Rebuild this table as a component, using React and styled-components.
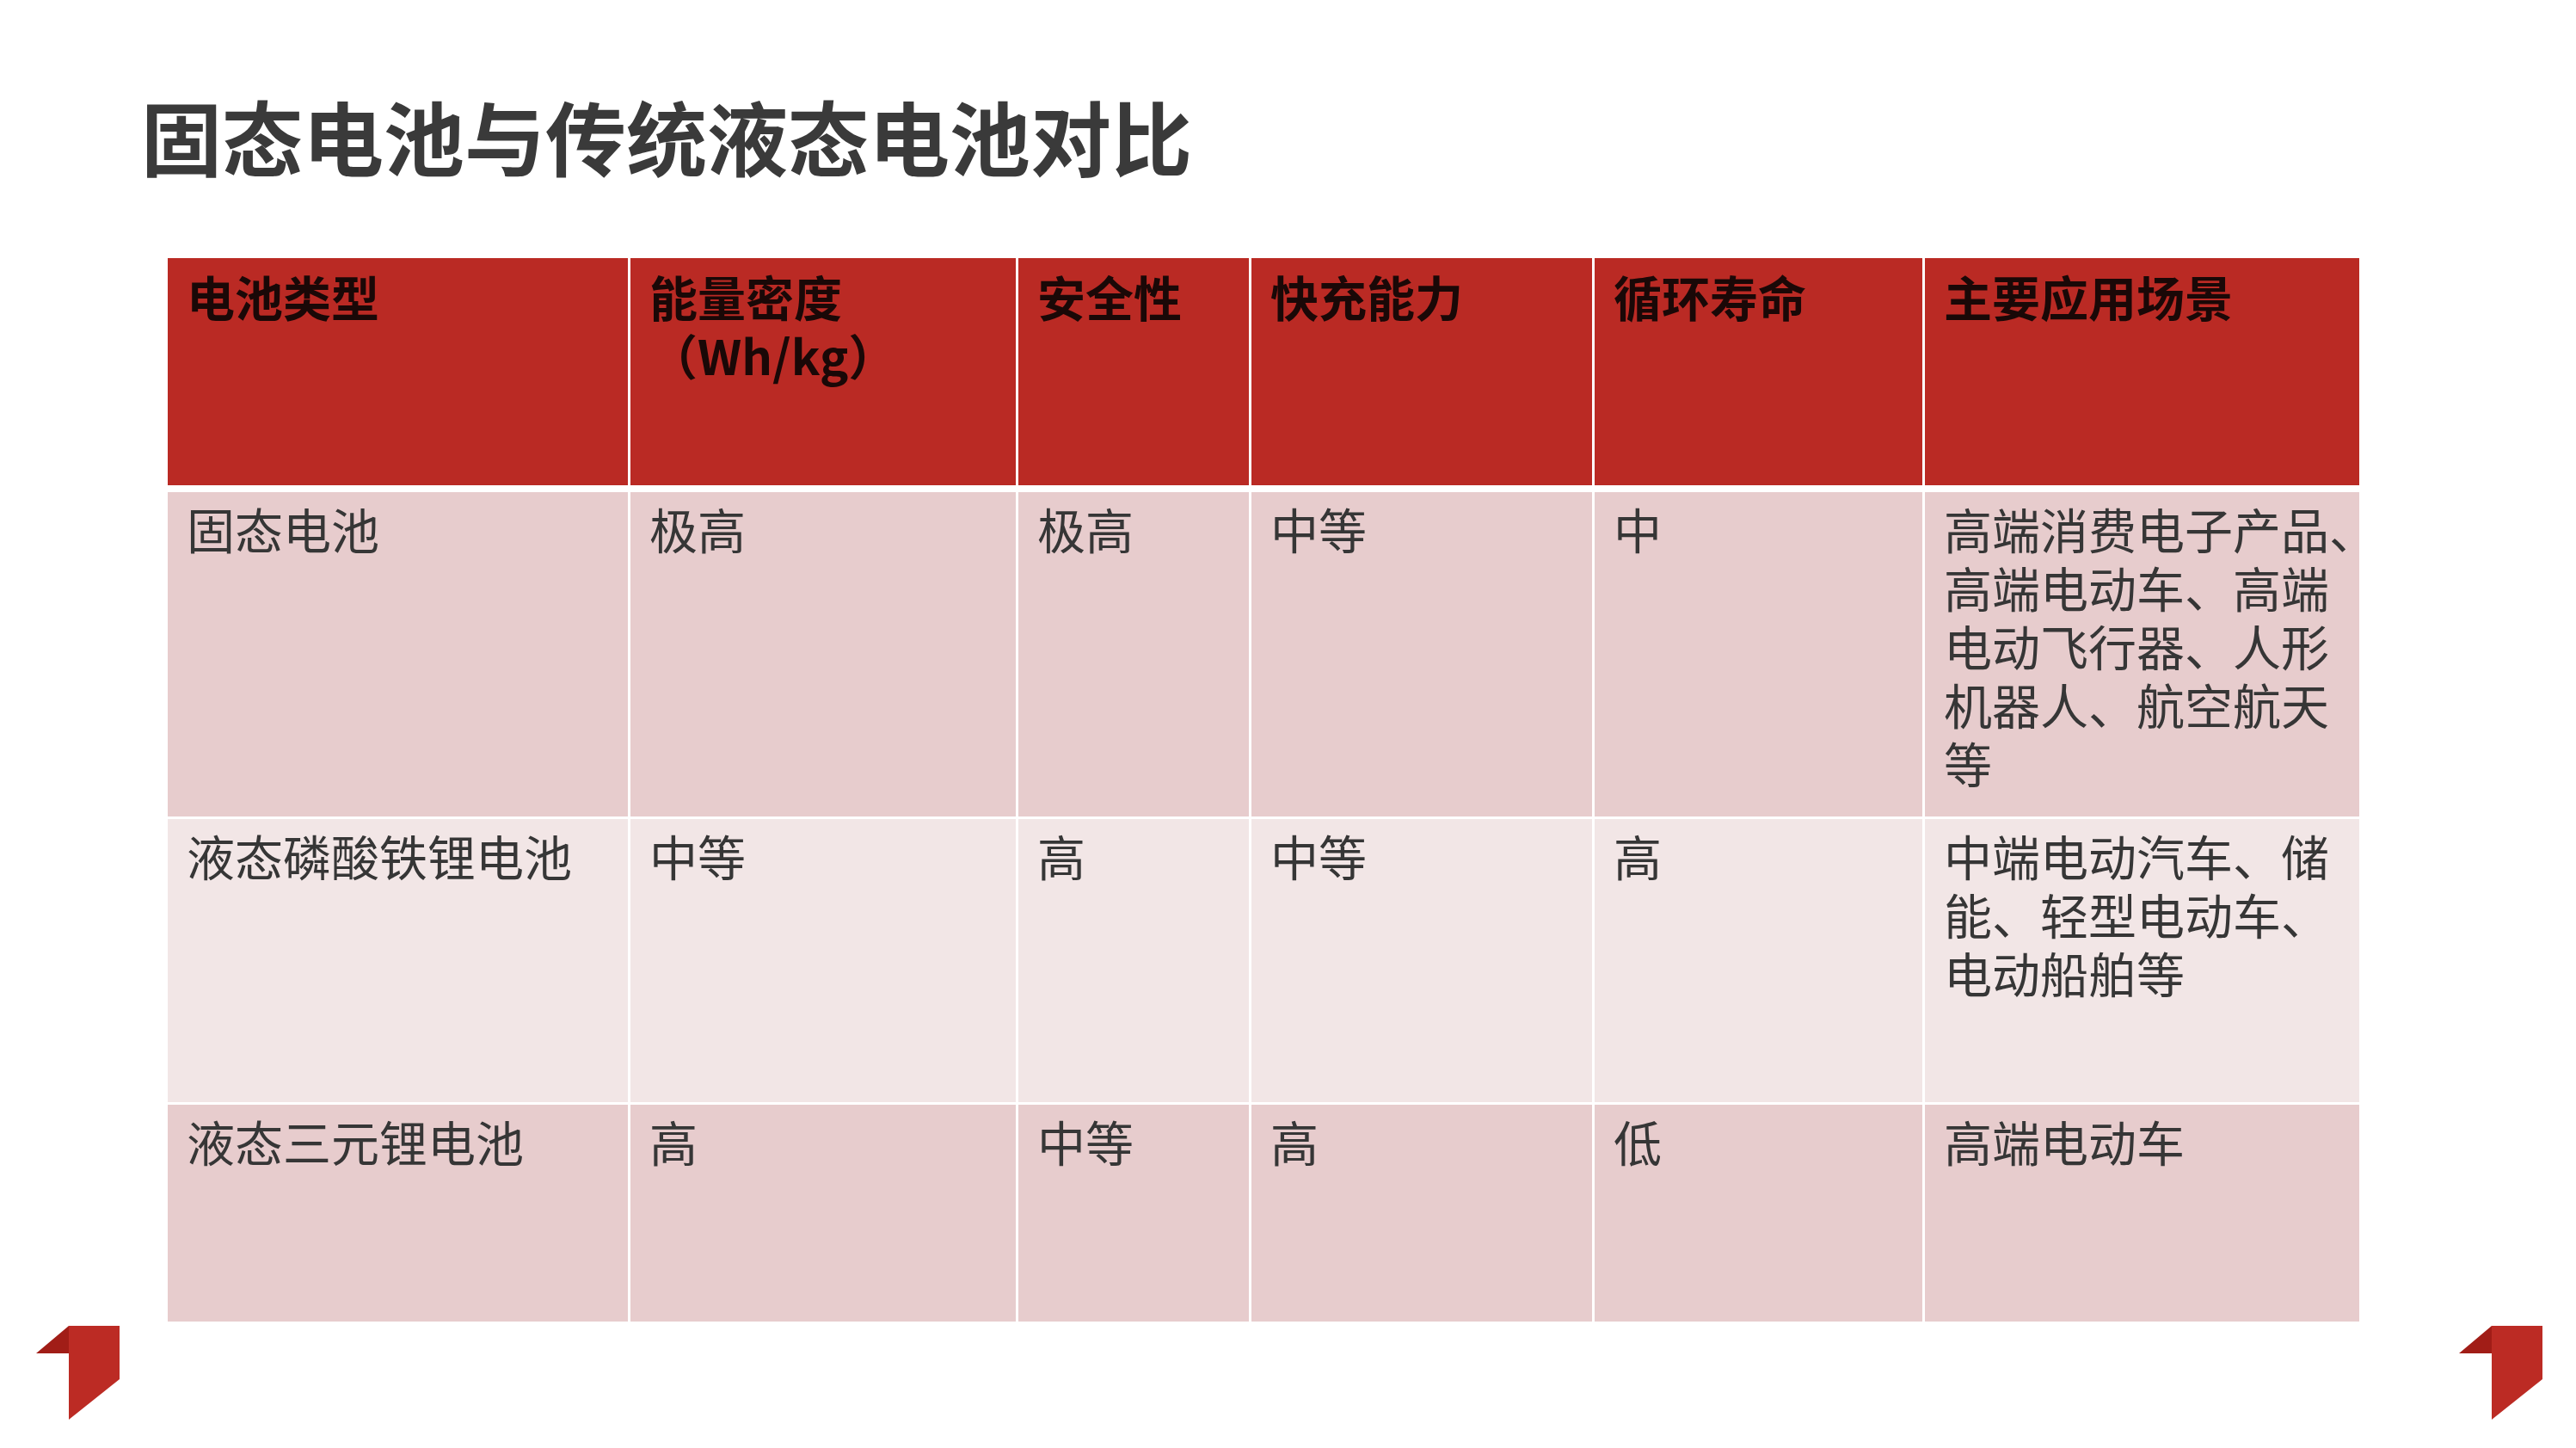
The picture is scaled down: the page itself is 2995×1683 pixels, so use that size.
import React from 'react';
import styled, { createGlobalStyle } from 'styled-components';

const GlobalStyle = createGlobalStyle`
  html, body {
    margin: 0;
    padding: 0;
    background: #ffffff;
  }
  body {
    font-family: "Noto Sans CJK SC", "Noto Sans", sans-serif;
  }
`;

const HEADER_RED = '#ba2a24';
const ROW_DARK = '#e7cccd';
const ROW_LIGHT = '#f2e6e6';

const COLS = [538, 451, 271, 399, 384, 508];

const HEADERS = [
  ['电池类型'],
  ['能量密度', '（Wh/kg）'],
  ['安全性'],
  ['快充能力'],
  ['循环寿命'],
  ['主要应用场景'],
];

const ROWS = [
  {
    height: 382,
    bg: ROW_DARK,
    cells: [
      ['固态电池'],
      ['极高'],
      ['极高'],
      ['中等'],
      ['中'],
      ['高端消费电子产品、', '高端电动车、高端', '电动飞行器、人形', '机器人、航空航天', '等'],
    ],
  },
  {
    height: 332,
    bg: ROW_LIGHT,
    cells: [
      ['液态磷酸铁锂电池'],
      ['中等'],
      ['高'],
      ['中等'],
      ['高'],
      ['中端电动汽车、储', '能、轻型电动车、', '电动船舶等'],
    ],
  },
  {
    height: 255,
    bg: ROW_DARK,
    cells: [
      ['液态三元锂电池'],
      ['高'],
      ['中等'],
      ['高'],
      ['低'],
      ['高端电动车'],
    ],
  },
];

const Slide = styled.div`
  width: 2995px;
  height: 1683px;
  display: flex;
  flex-direction: column;
  overflow: hidden;
  background: #fff;
`;

const Title = styled.h1`
  margin: 110px 0 0 164px;
  font-size: 94px;
  line-height: 94px;
  height: 94px;
  font-weight: 700;
  color: #3a3a3a;
  white-space: nowrap;
`;

const TableWrap = styled.div`
  margin: 96px 0 0 192px;
`;

const Table = styled.table`
  border-collapse: collapse;
  table-layout: fixed;
  width: ${COLS.reduce((a, b) => a + b, 0)}px;
`;

const HeadCell = styled.th`
  background: ${HEADER_RED};
  border: 3px solid #fff;
  border-top: none;
  border-bottom: 8px solid #fff;
  padding: 10px 10px 0 22px;
  vertical-align: top;
  text-align: left;
  font-size: 56px;
  line-height: 68px;
  font-weight: 700;
  color: #1a0807;
  white-space: nowrap;
`;

const HeadRow = styled.tr`
  height: 268px;
`;

const BodyRow = styled.tr`
  height: ${(p) => p.$h}px;
`;

const Cell = styled.td`
  background: ${(p) => p.$bg};
  border: 3px solid #fff;
  padding: 8px 10px 0 22px;
  vertical-align: top;
  font-size: 56px;
  line-height: 68px;
  font-weight: 400;
  color: #363636;
  white-space: nowrap;
`;

const Footer = styled.div`
  margin-top: 2px;
  display: flex;
  justify-content: space-between;
  padding: 0 38px 0 42px;
`;

const Corner = () => (
  <svg width="98" height="110" viewBox="0 0 98 110">
    <polygon points="38,0 97,0 97,62 38,109" fill="#bc2b24" />
    <polygon points="38,0 0,32 38,32" fill="#a11d17" />
  </svg>
);

const Lines = ({ lines }) =>
  lines.map((l, i) => (
    <React.Fragment key={i}>
      {i > 0 && <br />}
      {l}
    </React.Fragment>
  ));

export default function App() {
  return (
    <>
      <GlobalStyle />
      <Slide>
        <Title>固态电池与传统液态电池对比</Title>
        <TableWrap>
          <Table>
            <colgroup>
              {COLS.map((w, i) => (
                <col key={i} style={{ width: w }} />
              ))}
            </colgroup>
            <thead>
              <HeadRow>
                {HEADERS.map((h, i) => (
                  <HeadCell key={i}>
                    <Lines lines={h} />
                  </HeadCell>
                ))}
              </HeadRow>
            </thead>
            <tbody>
              {ROWS.map((r, i) => (
                <BodyRow key={i} $h={r.height}>
                  {r.cells.map((c, j) => (
                    <Cell key={j} $bg={r.bg}>
                      <Lines lines={c} />
                    </Cell>
                  ))}
                </BodyRow>
              ))}
            </tbody>
          </Table>
        </TableWrap>
        <Footer>
          <Corner />
          <Corner />
        </Footer>
      </Slide>
    </>
  );
}
